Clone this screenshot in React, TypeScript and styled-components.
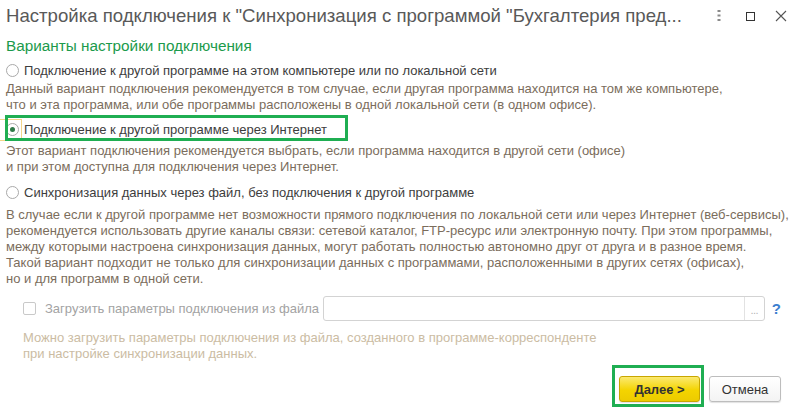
import React from "react";
import styled, { createGlobalStyle } from "styled-components";

const Global = createGlobalStyle`
  html, body { margin: 0; padding: 0; background: #fff; }
  body { font-family: "Liberation Sans", Arial, sans-serif; font-size: 13px; }
  * { box-sizing: border-box; }
`;

const Window = styled.div`
  width: 790px;
  height: 410px;
  background: #fff;
  display: flex;
  flex-direction: column;
  overflow: hidden;
`;

const TitleBar = styled.div`
  height: 32px;
  display: flex;
  align-items: center;
  padding: 0 0 0 6px;
`;

const Title = styled.div`
  flex: 1;
  font-size: 18.6px;
  line-height: 32px;
  color: #595959;
  white-space: nowrap;
`;

const TitleTools = styled.div`
  display: flex;
  align-items: center;
  height: 32px;
`;

const ToolIcon = styled.svg<{ $ml: number }>`
  display: block;
  margin-left: ${(p) => p.$ml}px;
`;

const Body = styled.div`
  display: flex;
  flex-direction: column;
  padding: 0 9px 0 6px;
`;

const SectionTitle = styled.div`
  margin-top: 4px;
  font-size: 15.3px;
  line-height: 20px;
  color: #1b9a4b;
  white-space: nowrap;
`;

const RadioRow = styled.label<{ $mt: number }>`
  position: relative;
  display: flex;
  align-items: flex-start;
  margin-top: ${(p) => p.$mt}px;
  line-height: 16px;
  color: #3d3d3d;
  white-space: nowrap;
`;

const RadioCircle = styled.span<{ $on?: boolean }>`
  width: 13px;
  height: 13px;
  margin-top: 1px;
  margin-right: 5px;
  border: 1px solid #a9a9a9;
  border-radius: 50%;
  background: #fff;
  display: flex;
  align-items: center;
  justify-content: center;
  flex: none;
  &::after {
    content: "";
    display: ${(p) => (p.$on ? "block" : "none")};
    width: 5px;
    height: 5px;
    border-radius: 50%;
    background: #2f7a48;
  }
`;

const FocusFrame = styled.span`
  position: absolute;
  left: -6px;
  top: -3px;
  width: 22px;
  height: 22px;
  border: 1px solid #f3d58a;
  border-left: none;
  pointer-events: none;
`;

const Highlight = styled.span<{ $w: number }>`
  position: absolute;
  left: -1px;
  top: -7px;
  width: ${(p) => p.$w}px;
  height: 26px;
  border: 3px solid #1fae52;
  pointer-events: none;
`;

const Note = styled.div<{ $mt: number; $muted?: boolean }>`
  margin-top: ${(p) => p.$mt}px;
  line-height: 16px;
  color: ${(p) => (p.$muted ? "#cbbca3" : "#7b6d5c")};
  white-space: nowrap;
`;

const Line = styled.div``;

const FileRow = styled.div`
  display: flex;
  align-items: center;
  margin-top: 9px;
  height: 25px;
  padding-left: 17px;
`;

const CheckBox = styled.span`
  width: 13px;
  height: 13px;
  border: 1px solid #c9c9c9;
  border-radius: 2px;
  background: #fff;
  flex: none;
`;

const CheckLabel = styled.span`
  margin-left: 9px;
  width: 279px;
  color: #a3a3a3;
  line-height: 16px;
  white-space: nowrap;
`;

const FileInput = styled.div`
  width: 443px;
  height: 25px;
  border: 1px solid #d3d3d3;
  border-radius: 3px;
  display: flex;
  justify-content: flex-end;
`;

const PickButton = styled.span`
  width: 20px;
  border-left: 1px solid #e2e2e2;
  color: #b5b5b5;
  font-size: 11px;
  line-height: 27px;
  text-align: center;
  letter-spacing: -0.5px;
`;

const HelpMark = styled.span`
  margin-left: 7px;
  color: #3c7fcf;
  font-size: 15px;
  font-weight: bold;
  line-height: 16px;
`;

const ButtonBar = styled.div`
  display: flex;
  justify-content: flex-end;
  gap: 9px;
  margin-top: 14px;
`;

const ButtonWrap = styled.div`
  position: relative;
`;

const Button = styled.button<{ $primary?: boolean; $w: number }>`
  width: ${(p) => p.$w}px;
  height: 26px;
  padding: 0;
  border-radius: 3px;
  font-family: "Liberation Sans", Arial, sans-serif;
  font-size: 13px;
  color: #333;
  font-weight: ${(p) => (p.$primary ? "bold" : "normal")};
  border: 1px solid ${(p) => (p.$primary ? "#c8a600" : "#bdbdbd")};
  background: ${(p) =>
    p.$primary
      ? "linear-gradient(#fbe970, #f4d400 55%, #eccb00)"
      : "linear-gradient(#ffffff, #f3f3f3)"};
  box-shadow: 0 1px 1px rgba(0, 0, 0, 0.12);
`;

const ButtonHighlight = styled.span`
  position: absolute;
  left: -7px;
  top: -11px;
  width: 92px;
  height: 42px;
  border: 3px solid #1fae52;
  pointer-events: none;
`;

export default function App() {
  return (
    <>
      <Global />
      <Window>
        <TitleBar>
          <Title>Настройка подключения к "Синхронизация с программой "Бухгалтерия пред...</Title>
          <TitleTools>
            <ToolIcon $ml={0} width="4" height="12" viewBox="0 0 4 12">
              <rect x="0.5" y="0" width="3" height="2" fill="#8a8a8a" />
              <rect x="0.5" y="4.5" width="3" height="2" fill="#8a8a8a" />
              <rect x="0.5" y="9" width="3" height="2" fill="#8a8a8a" />
            </ToolIcon>
            <ToolIcon $ml={25} width="9" height="9" viewBox="0 0 9 9">
              <rect x="0.5" y="0.5" width="8" height="8" fill="none" stroke="#333" strokeWidth="1" />
            </ToolIcon>
            <ToolIcon $ml={20} width="12" height="12" viewBox="0 0 12 12" style={{ marginRight: 3 }}>
              <path d="M1 1 L11 11 M11 1 L1 11" stroke="#555" strokeWidth="1.1" />
            </ToolIcon>
          </TitleTools>
        </TitleBar>

        <Body>
          <SectionTitle>Варианты настройки подключения</SectionTitle>

          <RadioRow $mt={7}>
            <RadioCircle />
            Подключение к другой программе на этом компьютере или по локальной сети
          </RadioRow>
          <Note $mt={2}>
            <Line>Данный вариант подключения рекомендуется в том случае, если другая программа находится на том же компьютере,</Line>
            <Line>что и эта программа, или обе программы расположены в одной локальной сети (в одном офисе).</Line>
          </Note>

          <RadioRow $mt={9}>
            <FocusFrame />
            <RadioCircle $on />
            Подключение к другой программе через Интернет
            <Highlight $w={343} />
          </RadioRow>
          <Note $mt={5}>
            <Line>Этот вариант подключения рекомендуется выбрать, если программа находится в другой сети (офисе)</Line>
            <Line>и при этом доступна для подключения через Интернет.</Line>
          </Note>

          <RadioRow $mt={10}>
            <RadioCircle />
            Синхронизация данных через файл, без подключения к другой программе
          </RadioRow>
          <Note $mt={6}>
            <Line>В случае если к другой программе нет возможности прямого подключения по локальной сети или через Интернет (веб-сервисы),</Line>
            <Line>рекомендуется использовать другие каналы связи: сетевой каталог, FTP-ресурс или электронную почту. При этом программы,</Line>
            <Line>между которыми настроена синхронизация данных, могут работать полностью автономно друг от друга и в разное время.</Line>
            <Line>Такой вариант подходит не только для синхронизации данных с программами, расположенными в других сетях (офисах),</Line>
            <Line>но и для программ в одной сети.</Line>
          </Note>

          <FileRow>
            <CheckBox />
            <CheckLabel>Загрузить параметры подключения из файла</CheckLabel>
            <FileInput>
              <PickButton>...</PickButton>
            </FileInput>
            <HelpMark>?</HelpMark>
          </FileRow>
          <Note $mt={9} $muted style={{ paddingLeft: 17 }}>
            <Line>Можно загрузить параметры подключения из файла, созданного в программе-корреспонденте</Line>
            <Line>при настройке синхронизации данных.</Line>
          </Note>

          <ButtonBar>
            <ButtonWrap>
              <Button $primary $w={81}>Далее &gt;</Button>
              <ButtonHighlight />
            </ButtonWrap>
            <ButtonWrap>
              <Button $w={72}>Отмена</Button>
            </ButtonWrap>
          </ButtonBar>
        </Body>
      </Window>
    </>
  );
}
